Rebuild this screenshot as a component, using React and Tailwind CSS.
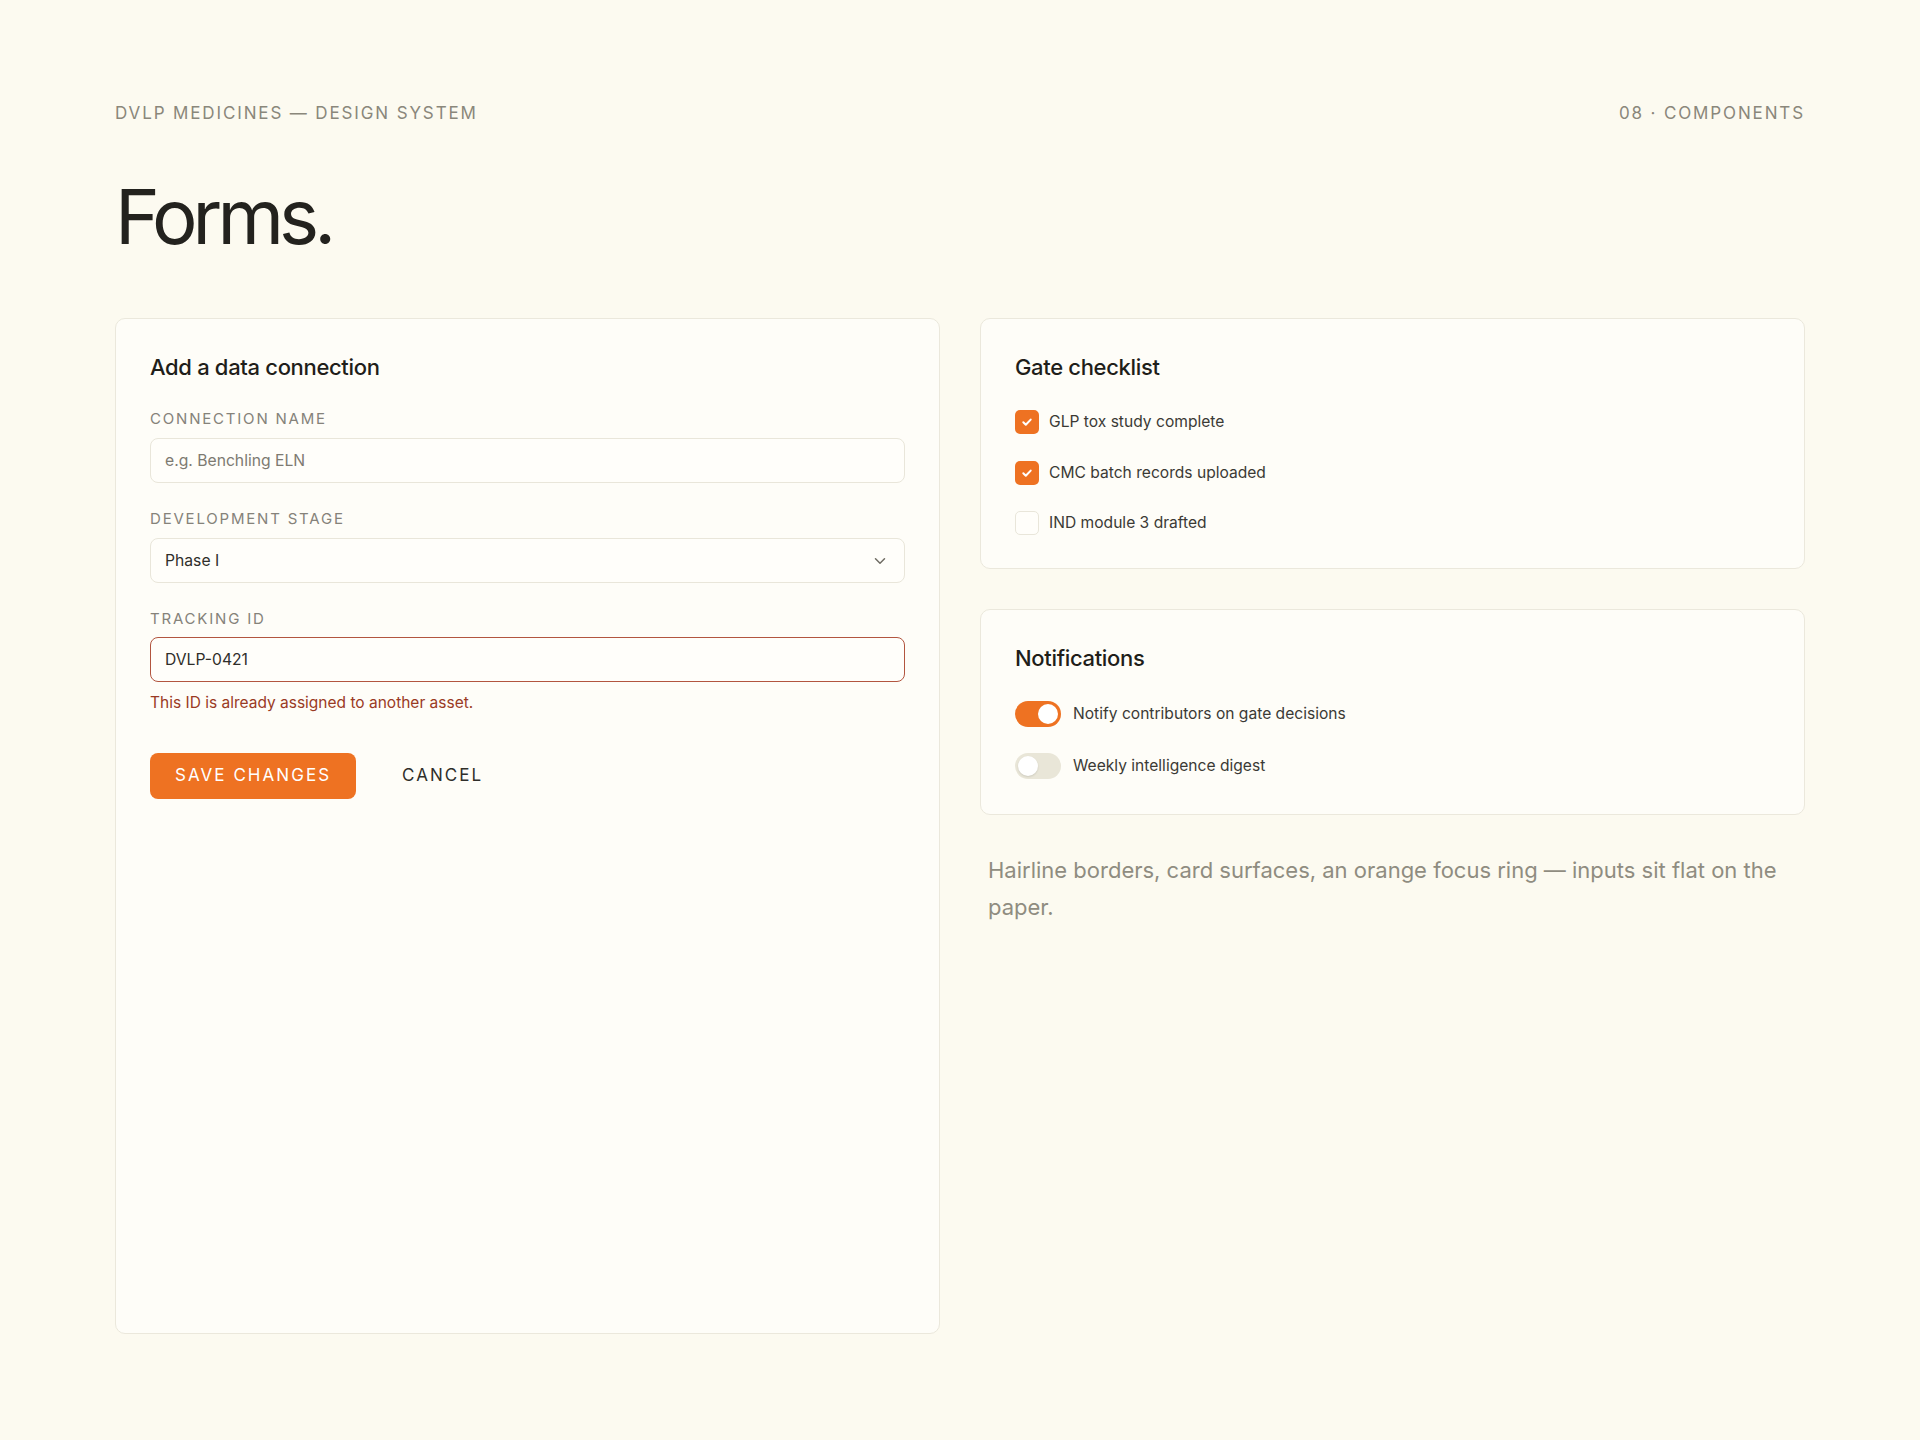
import React from "react";

function Check() {
  return (
    <svg width="14" height="14" viewBox="0 0 14 14" fill="none">
      <path d="M3.3 7.3l2.5 2.5 4.9-5.2" stroke="#fff" strokeWidth="2" strokeLinecap="round" strokeLinejoin="round" />
    </svg>
  );
}

function CheckRow({ checked, label }) {
  return (
    <div className="flex items-center gap-[10px]">
      {checked ? (
        <span className="flex h-6 w-6 items-center justify-center rounded-[5px] bg-[#ee7222]">
          <Check />
        </span>
      ) : (
        <span className="h-6 w-6 rounded-[5px] border border-[#e9e6da] bg-[#fffefa]" />
      )}
      <span className="text-[15.6px] leading-6 text-[#3b3a35]">{label}</span>
    </div>
  );
}

function Toggle({ on, label }) {
  return (
    <div className="flex items-center gap-3">
      {on ? (
        <span className="flex h-[26px] w-[46px] items-center justify-end rounded-full bg-[#ee7222] px-[3px]">
          <span className="h-[20px] w-[20px] rounded-full bg-white" />
        </span>
      ) : (
        <span className="flex h-[26px] w-[46px] items-center justify-start rounded-full bg-[#e9e6d8] px-[3px]">
          <span className="h-[20px] w-[20px] rounded-full bg-white shadow-[0_1px_2px_rgba(0,0,0,0.12)]" />
        </span>
      )}
      <span className="text-[15.6px] leading-6 text-[#3b3a35]">{label}</span>
    </div>
  );
}

function Label({ children }) {
  return (
    <div className="text-[15px] leading-5 tracking-[0.12em] text-[#85827a]">{children}</div>
  );
}

export default function App() {
  return (
    <div className="flex min-h-screen flex-col bg-[#fcfaf0] px-[115px] pb-[106px] pt-[101px] font-['Inter',sans-serif]">
      <header className="flex justify-between text-[17px] leading-6 tracking-[0.11em] text-[#8a877b]">
        <span>DVLP MEDICINES — DESIGN SYSTEM</span>
        <span>08 · COMPONENTS</span>
      </header>

      <h1 className="mt-[53px] text-[76px] leading-none tracking-[-0.065em] text-[#23221e]">Forms.</h1>

      <div className="mt-[64px] grid flex-1 grid-cols-2 gap-10">
        <section className="rounded-[10px] border border-[#ebe8dc] bg-[#fefdf8] p-[34px]">
          <h2 className="text-[22px] font-medium leading-7 tracking-[-0.015em] text-[#1f1e1a]">Add a data connection</h2>

          <div className="mt-[28px] flex flex-col gap-[26px]">
            <div className="flex flex-col gap-[9px]">
              <Label>CONNECTION NAME</Label>
              <div className="flex h-[45px] items-center rounded-[8px] border border-[#e9e6da] bg-[#fffefa] px-[14px] text-[15.7px] text-[#7d7a71]">
                e.g. Benchling ELN
              </div>
            </div>

            <div className="flex flex-col gap-[9px]">
              <Label>DEVELOPMENT STAGE</Label>
              <div className="flex h-[45px] items-center justify-between rounded-[8px] border border-[#e9e6da] bg-[#fffefa] pl-[14px] pr-[18px] text-[15.7px] text-[#2f2e2a]">
                <span>Phase I</span>
                <svg width="12" height="8" viewBox="0 0 12 8" fill="none">
                  <path d="M1.5 1.8l4.5 4.4 4.5-4.4" stroke="#6f6c63" strokeWidth="1.5" strokeLinecap="round" strokeLinejoin="round" />
                </svg>
              </div>
            </div>

            <div className="flex flex-col gap-[8px]">
              <Label>TRACKING ID</Label>
              <div className="flex h-[45px] items-center rounded-[8px] border border-[#b2553f] bg-[#fffefa] px-[14px] text-[15.7px] text-[#2f2e2a]">
                DVLP-0421
              </div>
              <div className="mt-[3px] text-[15.5px] leading-5 text-[#9a3a24]">This ID is already assigned to another asset.</div>
            </div>
          </div>

          <div className="mt-[40px] flex items-center gap-[46px]">
            <button className="h-[46px] rounded-[8px] bg-[#ee7222] px-[25px] text-[17px] tracking-[0.12em] text-white">
              SAVE CHANGES
            </button>
            <button className="text-[17px] tracking-[0.12em] text-[#2f2e2a]">CANCEL</button>
          </div>
        </section>

        <div className="flex flex-col gap-10">
          <section className="rounded-[10px] border border-[#ebe8dc] bg-[#fefdf8] px-[34px] pb-[33px] pt-[34px]">
            <h2 className="text-[22px] font-medium leading-7 tracking-[-0.015em] text-[#1f1e1a]">Gate checklist</h2>
            <div className="mt-[29px] flex flex-col gap-[26.5px]">
              <CheckRow checked label="GLP tox study complete" />
              <CheckRow checked label="CMC batch records uploaded" />
              <CheckRow label="IND module 3 drafted" />
            </div>
          </section>

          <section className="rounded-[10px] border border-[#ebe8dc] bg-[#fefdf8] px-[34px] pb-[35px] pt-[34px]">
            <h2 className="text-[22px] font-medium leading-7 tracking-[-0.015em] text-[#1f1e1a]">Notifications</h2>
            <div className="mt-[29px] flex flex-col gap-[26px]">
              <Toggle on label="Notify contributors on gate decisions" />
              <Toggle label="Weekly intelligence digest" />
            </div>
          </section>

          <p className="-mt-[3px] px-2 text-[22px] leading-[37px] text-[#8f8c80]">
            Hairline borders, card surfaces, an orange focus ring — inputs sit flat on the paper.
          </p>
        </div>
      </div>
    </div>
  );
}
